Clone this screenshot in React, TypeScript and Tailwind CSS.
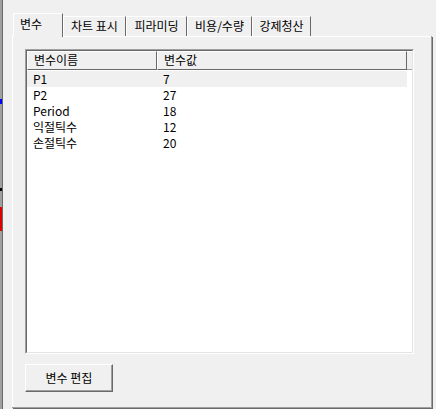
import React from "react";

type Row = { name: string; value: string };

const rows: Row[] = [
  { name: "P1", value: "7" },
  { name: "P2", value: "27" },
  { name: "Period", value: "18" },
  { name: "익절틱수", value: "12" },
  { name: "손절틱수", value: "20" },
];

const tabs = [
  { label: "변수", w: "w-[50px]" },
  { label: "차트 표시", w: "w-[63px]" },
  { label: "피라미딩", w: "w-[61px]" },
  { label: "비용/수량", w: "w-[65px]" },
  { label: "강제청산", w: "w-[59px]" },
];

export default function App() {
  return (
    <div
      className="flex h-[409px] w-[436px] overflow-hidden bg-[#f0f0f0] text-[12px] leading-[16px] text-black"
      style={{ fontFamily: '"Noto Sans CJK KR", "Noto Sans", sans-serif' }}
    >
      {/* edge of the window behind */}
      <div className="relative h-full w-[3px] shrink-0 border-r border-[#696969] bg-[#a0a0a0]">
        <div className="absolute left-0 top-[99px] h-[5px] w-[2px] bg-[#0000ff]" />
        <div className="absolute left-0 top-[188px] h-[3px] w-[2px] bg-black" />
        <div className="absolute left-0 top-[207px] h-[24px] w-[2px] bg-[#e00000]" />
      </div>

      <div className="flex flex-col pl-[9px] pt-[13px]">
        {/* tabs */}
        <div className="relative z-10 flex h-[23px] items-end pl-[1px]">
          {tabs.map((t, i) =>
            i === 0 ? (
              <div
                key={t.label}
                className={`${t.w} -mb-[1px] flex h-[24px] items-start border-l border-t border-r border-l-white border-t-white border-r-[#696969] bg-[#f0f0f0] pl-[6px] pt-[2px]`}
              >
                {t.label}
              </div>
            ) : (
              <div
                key={t.label}
                className={`${t.w} flex h-[20px] items-start justify-center border-l border-t border-r border-l-white border-t-white border-r-[#696969] pt-[1px]`}
              >
                {t.label}
              </div>
            )
          )}
        </div>

        {/* panel */}
        <div className="h-[372px] w-[420px] border-b border-r border-b-[#a0a0a0] border-r-[#a0a0a0] shadow-[1px_1px_0_#696969]">
          <div className="h-full w-full border-l border-t border-l-white border-t-white pl-[12px] pt-[12px]">
            {/* list view */}
            <div className="h-[305px] w-[389px] border-l border-t border-b border-r border-l-[#a0a0a0] border-t-[#a0a0a0] border-b-white border-r-white">
              <div className="flex h-full w-full flex-col border-l border-t border-b border-r border-l-[#696969] border-t-[#696969] border-b-[#e3e3e3] border-r-[#e3e3e3] bg-white">
                <div className="flex h-[19px] shrink-0 bg-[#f0f0f0]">
                  <div className="h-full w-[130px] border-l border-t border-b border-r border-l-white border-t-white border-b-[#696969] border-r-[#696969] pl-[6px]">
                    변수이름
                  </div>
                  <div className="h-full w-[250px] border-l border-t border-b border-r border-l-white border-t-white border-b-[#696969] border-r-[#696969] pl-[6px]">
                    변수값
                  </div>
                  <div className="h-full flex-1 border-t border-b border-t-white border-b-[#a0a0a0]" />
                </div>
                <div className="pt-[1px]">
                  {rows.map((r, i) => (
                    <div
                      key={r.name}
                      className={`flex h-[16px] w-[380px] items-center ${i === 0 ? "bg-[#f0f0f0]" : ""}`}
                    >
                      <div className="w-[130px] pl-[6px]">{r.name}</div>
                      <div className="pl-[6px]">{r.value}</div>
                    </div>
                  ))}
                </div>
              </div>
            </div>

            {/* button */}
            <button className="mt-[10px] flex h-[28px] w-[88px] items-center justify-center border-l border-t border-b border-r border-l-white border-t-white border-b-[#696969] border-r-[#696969] bg-[#f0f0f0] shadow-[inset_-1px_-1px_0_#a0a0a0]">
              변수 편집
            </button>
          </div>
        </div>
      </div>
    </div>
  );
}
